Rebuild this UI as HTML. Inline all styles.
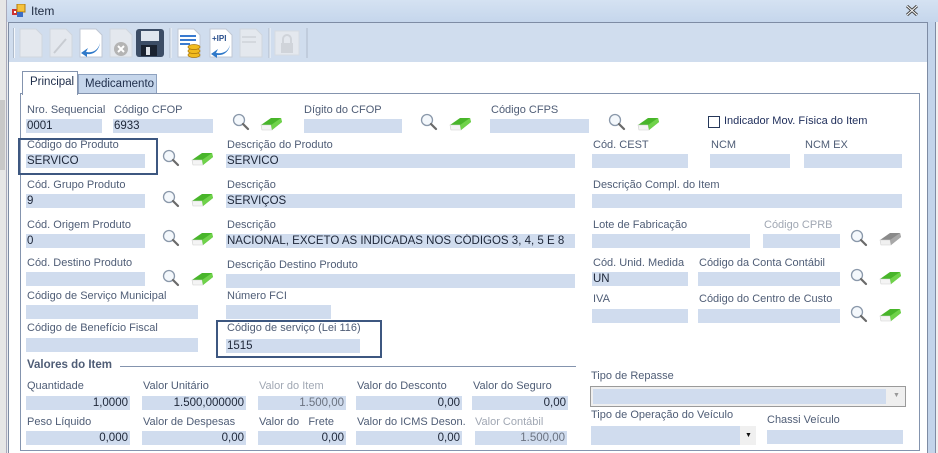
<!DOCTYPE html>
<html><head><meta charset="utf-8"><style>
*{margin:0;padding:0;box-sizing:border-box}
body{width:938px;height:453px;overflow:hidden;background:#e9ecf0;font-family:"Liberation Sans",sans-serif;font-size:11px;position:relative}
div,span{position:absolute}
.l{color:#4f5d76;white-space:nowrap}
.g{color:#a0a7b3}
.f{background:#d0dcee;height:14px;color:#1d2638;line-height:14px;padding-left:1px;white-space:nowrap;overflow:hidden;font-size:11.5px}
.r{text-align:right;padding-right:2px}
.gr{color:#6a7280}
.box{border:2px solid #3d5780}
</style></head><body>
<div style="left:0;top:0;width:7px;height:453px;background:#e6e6e6;border-right:1px solid #aab"></div>
<div style="left:0;top:100px;width:5px;height:70px;background:#c8c8c8"></div>
<div style="left:7px;top:0;width:931px;height:22px;background:linear-gradient(#d5e2f2,#c5d6ec)"></div>
<svg style="position:absolute;left:12px;top:4px" width="14" height="14"><rect x="0" y="5" width="6" height="6" fill="#c33"/><rect x="2" y="7" width="2" height="2" fill="#fff"/><rect x="5" y="0" width="8" height="8" fill="#f5c23c" stroke="#b07a10" stroke-width="1"/><rect x="5" y="8" width="6" height="5" fill="#3b6cc4"/></svg>
<div style="left:31px;top:4px;font-size:12px;color:#1e2a40">Item</div>
<svg style="position:absolute;left:906px;top:5px" width="12" height="11"><path d="M1 1l10 9M11 1l-10 9" stroke="#444" stroke-width="3"/><path d="M1 1l10 9M11 1l-10 9" stroke="#fff" stroke-width="1"/></svg>
<div style="left:927px;top:22px;width:1px;height:431px;background:#7e8ca4"></div>
<div style="left:928px;top:22px;width:7px;height:431px;background:#c3d4ea"></div>
<div style="left:935px;top:22px;width:1px;height:431px;background:#7e8ca4"></div>
<div style="left:936px;top:22px;width:2px;height:431px;background:#f0f0f0"></div>
<div style="left:8px;top:22px;width:919px;height:431px;background:#fff;border-left:1px solid #7e8ca4;border-top:1px solid #7e8ca4"></div>
<div style="left:9px;top:23px;width:918px;height:39px;background:#d0ddee"></div>
<div style="left:13px;top:28px;width:2px;height:30px;background:#f4f7fb;border-left:1px solid #b0bccc"></div>
<svg style="position:absolute;left:18px;top:27px" width="300" height="32">
 <g fill="#e4e8ee" stroke="#d0d6de"><path d="M2 2h16l6 6v22H2z"/><path d="M32 2h16l6 6v22H32z"/></g>
 <path d="M36 26l12-14" stroke="#c8ccd2" stroke-width="2"/>
 <path d="M62 2h16l6 6v22H62z" fill="#fff" stroke="#c0c8d4"/>
 <path d="M82 16c-2 8-8 10-14 9l2-4-7 5 6 4 0-3c7 1 12-4 13-11z" fill="#2f79c9"/>
 <path d="M92 2h16l6 6v22H92z" fill="#e4e8ee" stroke="#d0d6de"/>
 <circle cx="103" cy="22" r="7" fill="#b4b4b4"/><path d="M100 19l6 6M106 19l-6 6" stroke="#fff" stroke-width="2"/>
 <rect x="118" y="2" width="28" height="28" rx="3" fill="#3c4d66"/><rect x="123" y="4" width="18" height="10" fill="#dfe6ef"/><rect x="123" y="18" width="16" height="11" fill="#1a2230"/><rect x="128" y="20" width="4" height="8" fill="#e0e4ea"/>
 <line x1="152" y1="1" x2="152" y2="31" stroke="#b0bccc"/><line x1="153" y1="1" x2="153" y2="31" stroke="#f4f7fb"/>
 <path d="M160 2h16l6 6v22H160z" fill="#fff" stroke="#c0c8d4"/>
 <g fill="#3a7bd0"><rect x="162" y="8" width="16" height="2"/><rect x="162" y="12" width="16" height="2"/><rect x="162" y="16" width="10" height="2"/></g>
 <g fill="#f1bb1f" stroke="#a87408" stroke-width=".7"><ellipse cx="176" cy="28" rx="6" ry="2.5"/><ellipse cx="176" cy="24" rx="6" ry="2.5"/><ellipse cx="176" cy="20" rx="6" ry="2.5"/></g>
 <path d="M192 2h16l6 6v22H192z" fill="#fff" stroke="#c0c8d4"/>
 <text x="194" y="14" font-size="8" font-weight="bold" fill="#2a4f8c" font-family="Liberation Sans">+IPI</text>
 <path d="M212 18c-2 7-8 9-14 8l2-4-7 5 6 4 0-3c7 1 12-4 13-10z" fill="#2f79c9"/>
 <path d="M222 2h16l6 6v22H222z" fill="#e4e8ee" stroke="#d0d6de"/><rect x="224" y="9" width="14" height="2" fill="#d4d8de"/><rect x="224" y="14" width="14" height="2" fill="#d4d8de"/>
 <line x1="251" y1="1" x2="251" y2="31" stroke="#b0bccc"/><line x1="252" y1="1" x2="252" y2="31" stroke="#f4f7fb"/>
 <rect x="257" y="4" width="24" height="24" fill="#e4e8ee" stroke="#d6dbe2"/><rect x="263" y="16" width="12" height="10" fill="#d0d4da"/><path d="M265 16v-4a4 4 0 0 1 8 0v4" fill="none" stroke="#d0d4da" stroke-width="2"/>
 <line x1="289" y1="1" x2="289" y2="31" stroke="#b0bccc"/>
</svg>
<div style="left:78px;top:74px;width:79px;height:20px;background:#c6d6eb;border:1px solid #8fa2bf;border-bottom:none"></div>
<div style="left:85px;top:78px;color:#1e2d4a;font-size:11.5px">Medicamento</div>
<div style="left:20px;top:93px;width:900px;height:358px;border:1px solid #8494ae;background:#fff"></div>
<div style="left:22px;top:71px;width:56px;height:24px;background:#fff;border:1px solid #8494ae;border-bottom:none"></div>
<div style="left:30px;top:76px;color:#1e2d4a;font-size:11.5px">Principal</div>

<div class="l" style="left:27px;top:104px">Nro. Sequencial</div><div class="f" style="left:26px;top:119px;width:76px">0001</div>
<div class="l" style="left:114px;top:104px">Código CFOP</div><div class="f" style="left:113px;top:119px;width:100px">6933</div>
<div class="l" style="left:304px;top:104px">Dígito do CFOP</div><div class="f" style="left:304px;top:119px;width:98px"></div>
<div class="l" style="left:491px;top:104px">Código CFPS</div><div class="f" style="left:490px;top:119px;width:99px"></div>
<div style="left:708px;top:116px;width:12px;height:12px;border:1px solid #26385a;background:#fff"></div>
<div class="l" style="left:724px;top:115px;color:#1e2d5a">Indicador Mov. Física do Item</div>
<div class="box" style="left:18px;top:138px;width:140px;height:37px"></div>
<div class="l" style="left:27px;top:139px">Código do Produto</div><div class="f" style="left:26px;top:154px;width:119px">SERVICO</div>
<div class="l" style="left:227px;top:139px">Descrição do Produto</div><div class="f" style="left:226px;top:154px;width:349px">SERVICO</div>
<div class="l" style="left:593px;top:139px">Cód. CEST</div><div class="f" style="left:592px;top:154px;width:96px"></div>
<div class="l" style="left:711px;top:139px">NCM</div><div class="f" style="left:710px;top:154px;width:80px"></div>
<div class="l" style="left:805px;top:139px">NCM EX</div><div class="f" style="left:804px;top:154px;width:98px"></div>
<div class="l" style="left:27px;top:179px">Cód. Grupo Produto</div><div class="f" style="left:26px;top:194px;width:119px">9</div>
<div class="l" style="left:227px;top:179px">Descrição</div><div class="f" style="left:226px;top:194px;width:349px">SERVIÇOS</div>
<div class="l" style="left:593px;top:179px">Descrição Compl. do Item</div><div class="f" style="left:592px;top:194px;width:310px"></div>
<div class="l" style="left:27px;top:219px">Cód. Origem Produto</div><div class="f" style="left:26px;top:234px;width:119px">0</div>
<div class="l" style="left:227px;top:219px">Descrição</div><div class="f" style="left:226px;top:234px;width:349px">NACIONAL, EXCETO AS INDICADAS NOS CÓDIGOS 3, 4, 5 E 8</div>
<div class="l" style="left:593px;top:219px">Lote de Fabricação</div><div class="f" style="left:592px;top:234px;width:158px"></div>
<div class="l g" style="left:764px;top:219px">Código CPRB</div><div class="f" style="left:763px;top:234px;width:77px"></div>
<div class="l" style="left:27px;top:257px">Cód. Destino Produto</div><div class="f" style="left:26px;top:272px;width:119px"></div>
<div class="l" style="left:227px;top:259px">Descrição Destino Produto</div><div class="f" style="left:226px;top:274px;width:349px"></div>
<div class="l" style="left:593px;top:257px">Cód. Unid. Medida</div><div class="f" style="left:592px;top:272px;width:96px">UN</div>
<div class="l" style="left:699px;top:257px">Código da Conta Contábil</div><div class="f" style="left:698px;top:272px;width:142px"></div>
<div class="l" style="left:27px;top:290px">Código de Serviço Municipal</div><div class="f" style="left:26px;top:305px;width:172px"></div>
<div class="l" style="left:227px;top:290px">Número FCI</div><div class="f" style="left:226px;top:305px;width:105px"></div>
<div class="l" style="left:593px;top:293px">IVA</div><div class="f" style="left:592px;top:309px;width:96px"></div>
<div class="l" style="left:699px;top:293px">Código do Centro de Custo</div><div class="f" style="left:698px;top:309px;width:142px"></div>
<div class="l" style="left:27px;top:322px">Código de Benefício Fiscal</div><div class="f" style="left:26px;top:338px;width:172px"></div>
<div class="box" style="left:216px;top:320px;width:166px;height:38px"></div>
<div class="l" style="left:227px;top:322px">Código de serviço (Lei 116)</div><div class="f" style="left:226px;top:339px;width:134px">1515</div>
<div style="left:27px;top:359px;font-weight:bold;color:#4f5d76;font-size:11.5px">Valores do Item</div>
<div style="left:120px;top:366px;width:456px;height:1px;background:#8494ae"></div>
<div class="l" style="left:27px;top:380px">Quantidade</div><div class="f r" style="left:26px;top:396px;width:104px">1,0000</div>
<div class="l" style="left:143px;top:380px">Valor Unitário</div><div class="f r" style="left:142px;top:396px;width:104px">1.500,000000</div>
<div class="l g" style="left:259px;top:380px">Valor do Item</div><div class="f r gr" style="left:258px;top:396px;width:88px">1.500,00</div>
<div class="l" style="left:357px;top:380px">Valor do Desconto</div><div class="f r" style="left:356px;top:396px;width:106px">0,00</div>
<div class="l" style="left:473px;top:380px">Valor do Seguro</div><div class="f r" style="left:472px;top:396px;width:96px">0,00</div>
<div class="l" style="left:27px;top:416px">Peso Líquido</div><div class="f r" style="left:26px;top:431px;width:104px">0,000</div>
<div class="l" style="left:143px;top:416px">Valor de Despesas</div><div class="f r" style="left:142px;top:431px;width:104px">0,00</div>
<div class="l" style="left:259px;top:416px">Valor do &nbsp;&nbsp;Frete</div><div class="f r" style="left:258px;top:431px;width:88px">0,00</div>
<div class="l" style="left:357px;top:416px">Valor do ICMS Deson.</div><div class="f r" style="left:356px;top:431px;width:106px">0,00</div>
<div class="l g" style="left:475px;top:416px">Valor Contábil</div><div class="f r gr" style="left:475px;top:431px;width:92px">1.500,00</div>
<div class="l" style="left:591px;top:370px">Tipo de Repasse</div>
<div style="left:590px;top:386px;width:316px;height:21px;border:1px solid #9a9a9a;background:#efefef"></div>
<div style="left:593px;top:389px;width:293px;height:15px;background:#d0dcee"></div>
<div style="left:893px;top:392px;font-size:7px;color:#999">▼</div>
<div class="l" style="left:591px;top:409px">Tipo de Operação do Veículo</div>
<div style="left:591px;top:426px;width:149px;height:19px;background:#d0dcee"></div>
<div style="left:740px;top:426px;width:16px;height:19px;background:#f0f0f0"></div>
<div style="left:745px;top:432px;font-size:7px;color:#111">▼</div>
<div class="l" style="left:767px;top:414px">Chassi Veículo</div><div class="f" style="left:767px;top:430px;width:136px"></div>

<svg width="0" height="0" style="position:absolute"><defs>
<g id="mg"><circle cx="7" cy="7" r="5.5" fill="#f4f8fc" stroke="#8a98aa" stroke-width="1.3"/><path d="M11 11l5 5" stroke="#6a6a6a" stroke-width="2.2" stroke-linecap="round"/></g>
<g id="er"><path d="M2 9l10-7h10l1 4-10 8H3z" fill="#48b52a"/><path d="M2 9h10l1 5H3z" fill="#f4f4f4" stroke="#d0d0d0" stroke-width=".6"/><path d="M12 9l10-7 1 4-10 8z" fill="#6fd24a"/></g>
<g id="erg"><path d="M2 9l10-7h10l1 4-10 8H3z" fill="#8a8a8a"/><path d="M2 9h10l1 5H3z" fill="#f0f0f0" stroke="#d0d0d0" stroke-width=".6"/><path d="M12 9l10-7 1 4-10 8z" fill="#a8a8a8"/></g>
</defs></svg>
<svg style="position:absolute;left:0;top:0" width="938" height="453">
<use href="#mg" x="232" y="113"/><use href="#er" x="259" y="116"/>
<use href="#mg" x="420" y="113"/><use href="#er" x="448" y="116"/>
<use href="#mg" x="608" y="113"/><use href="#er" x="636" y="116"/>
<use href="#mg" x="162" y="149"/><use href="#er" x="190" y="151"/>
<use href="#mg" x="162" y="190"/><use href="#er" x="190" y="192"/>
<use href="#mg" x="162" y="229"/><use href="#er" x="190" y="231"/>
<use href="#mg" x="162" y="269"/><use href="#er" x="190" y="271"/>
<use href="#mg" x="850" y="229"/><use href="#erg" x="878" y="231"/>
<use href="#mg" x="850" y="268"/><use href="#er" x="878" y="270"/>
<use href="#mg" x="850" y="305"/><use href="#er" x="878" y="307"/>
</svg>
</body></html>
